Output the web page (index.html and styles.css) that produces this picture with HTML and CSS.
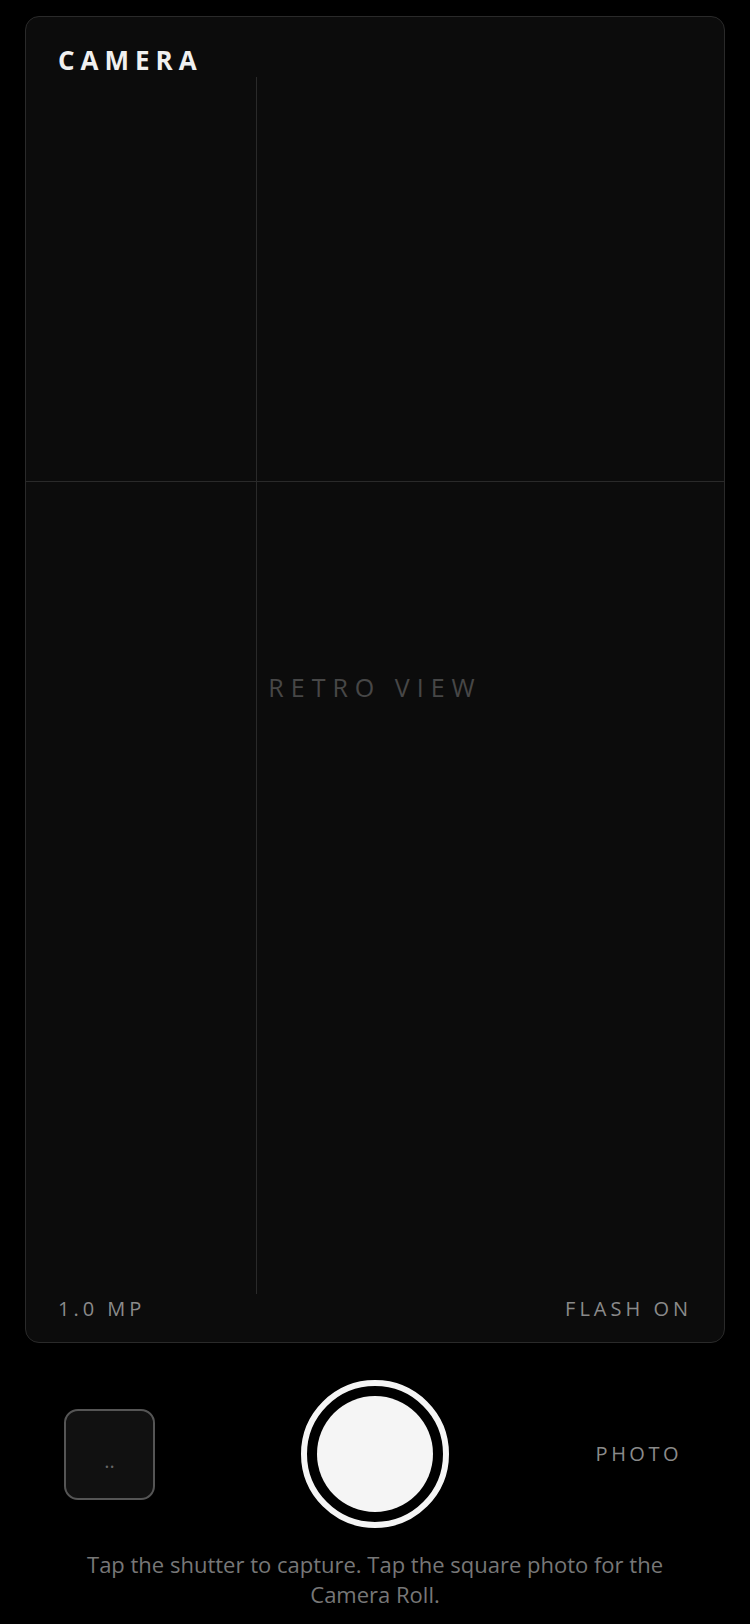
FILE: index.html
```html
<!DOCTYPE html>
<html lang="en">
<head>
<meta charset="utf-8">
<title>Camera</title>
<link rel="stylesheet" href="styles.css">
</head>
<body>
<main class="app">
  <section class="card">
    <header class="card-header">CAMERA</header>
    <div class="viewfinder">
      <span class="grid-line grid-v"></span>
      <span class="grid-line grid-h"></span>
      <span class="retro">RETRO VIEW</span>
    </div>
    <footer class="card-footer">
      <span class="meta">1.0 MP</span>
      <span class="meta">FLASH ON</span>
    </footer>
  </section>
  <div class="controls">
    <button class="thumb" type="button">..</button>
    <button class="shutter" type="button"><span class="shutter-core"></span></button>
    <span class="mode">PHOTO</span>
  </div>
  <p class="hint">Tap the shutter to capture. Tap the square photo for the Camera Roll.</p>
</main>
</body>
</html>
```
FILE: styles.css
```css
* { box-sizing: border-box; }
html, body {
  margin: 0;
  padding: 0;
  background: #000;
}
body {
  font-family: "Open Sans", "Liberation Sans", sans-serif;
  color: #f2f2f2;
}
.app {
  width: 750px;
  min-height: 1624px;
  padding: 16px 25px 0;
}
.card {
  height: 1327px;
  border: 1px solid #2a2a2a;
  border-radius: 14px;
  background: #0c0c0c;
  display: flex;
  flex-direction: column;
}
.card-header {
  padding: 26px 32px 0;
  height: 60px;
  font-size: 26px;
  line-height: 34px;
  font-weight: 700;
  letter-spacing: 6px;
  color: #f0f0f0;
}
.viewfinder {
  flex: 1;
  position: relative;
  display: flex;
  align-items: center;
  justify-content: center;
}
.grid-line {
  position: absolute;
  background: #2a2a2a;
}
.grid-v {
  left: 33%;
  top: 0;
  bottom: 0;
  width: 1px;
}
.grid-h {
  left: 0;
  right: 0;
  top: 33.2%;
  height: 1px;
}
.retro {
  font-size: 25px;
  font-weight: 400;
  letter-spacing: 7px;
  color: #474747;
  position: relative;
  top: 1px;
}
.card-footer {
  display: flex;
  justify-content: space-between;
  padding: 1px 32px 0;
  height: 48px;
  font-size: 20px;
  line-height: 28px;
}
.meta {
  color: #8a8a8a;
  letter-spacing: 4px;
  font-weight: 400;
}
.controls {
  display: grid;
  grid-template-columns: 1fr 148px 1fr;
  align-items: center;
  margin: 37px 39px 0;
  height: 148px;
}
.thumb {
  width: 91px;
  height: 91px;
  border: 2px solid #555;
  border-radius: 14px;
  background: #111;
  color: #666;
  font-family: "Open Sans", "Liberation Sans", sans-serif;
  font-size: 20px;
  line-height: 20px;
  padding: 14px 0 0;
  margin: 0;
  justify-self: start;
}
.shutter {
  width: 148px;
  height: 148px;
  border: 6px solid #f5f5f5;
  border-radius: 50%;
  background: #000;
  padding: 10px;
  margin: 0;
  display: flex;
}
.shutter-core {
  flex: 1;
  border-radius: 50%;
  background: #f5f5f5;
}
.mode {
  justify-self: end;
  margin-right: 4px;
  font-size: 20px;
  line-height: 28px;
  letter-spacing: 3.5px;
  color: #8a8a8a;
}
.hint {
  margin: 21px 39px 0;
  text-align: center;
  font-size: 22px;
  line-height: 30px;
  color: #777;
}
```
